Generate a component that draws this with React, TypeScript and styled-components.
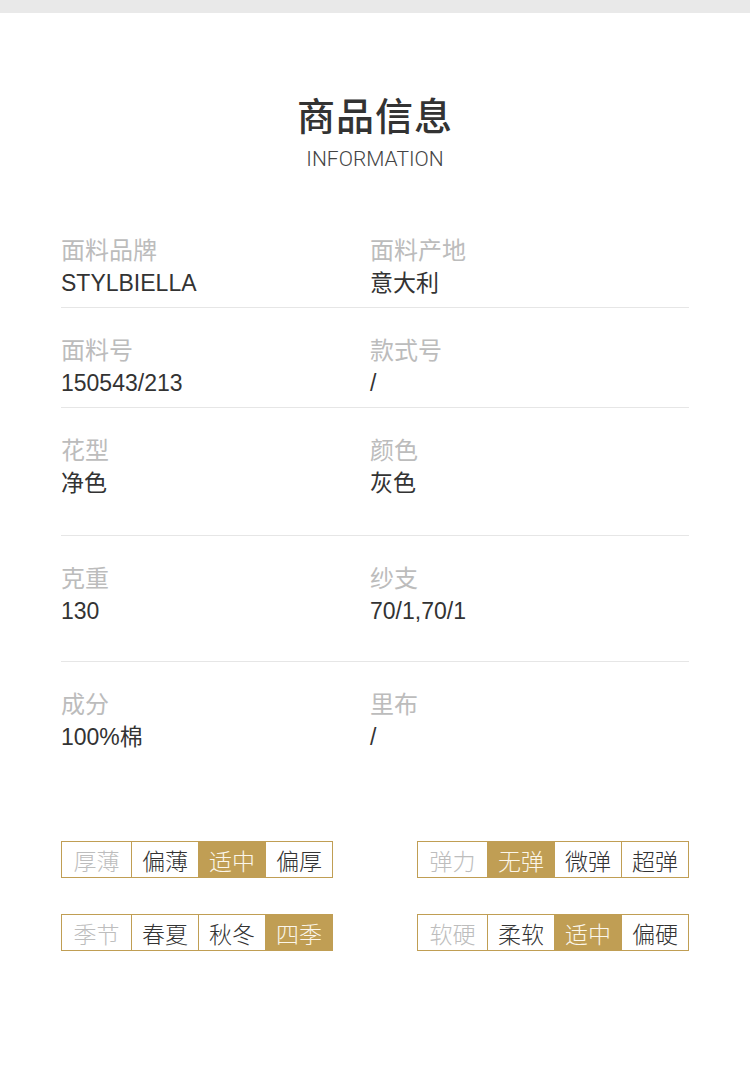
import styled, { createGlobalStyle } from 'styled-components';

const GOLD = '#c09e54';

const GlobalStyle = createGlobalStyle`
  body {
    margin: 0;
    background: #fff;
    font-family: "Liberation Sans", "Noto Sans CJK SC", sans-serif;
  }
`;

type Spec = { label: string; value: string };
type Row = { height: number; left: Spec; right: Spec };

const ROWS: Row[] = [
  { height: 100, left: { label: '面料品牌', value: 'STYLBIELLA' }, right: { label: '面料产地', value: '意大利' } },
  { height: 100, left: { label: '面料号', value: '150543/213' }, right: { label: '款式号', value: '/' } },
  { height: 128, left: { label: '花型', value: '净色' }, right: { label: '颜色', value: '灰色' } },
  { height: 126, left: { label: '克重', value: '130' }, right: { label: '纱支', value: '70/1,70/1' } },
  { height: 126, left: { label: '成分', value: '100%棉' }, right: { label: '里布', value: '/' } },
];

type Tag = { title: string; options: string[]; active: number };

const TAGS: Tag[][] = [
  [
    { title: '厚薄', options: ['偏薄', '适中', '偏厚'], active: 1 },
    { title: '弹力', options: ['无弹', '微弹', '超弹'], active: 0 },
  ],
  [
    { title: '季节', options: ['春夏', '秋冬', '四季'], active: 2 },
    { title: '软硬', options: ['柔软', '适中', '偏硬'], active: 1 },
  ],
];

const TopBar = styled.div`
  height: 13px;
  background: #e9e9e9;
`;

const Header = styled.header`
  display: flex;
  flex-direction: column;
  align-items: center;
  padding-top: 78px;
`;

const Title = styled.h1`
  margin: 0;
  font-family: "Noto Sans CJK SC", sans-serif;
  font-size: 38px;
  font-weight: 500;
  line-height: 46px;
  color: #333;
  letter-spacing: 1px;
`;

const Subtitle = styled.div`
  margin-top: 10px;
  font-family: Roboto, "Liberation Sans", sans-serif;
  font-weight: 300;
  font-size: 21px;
  line-height: 24px;
  color: #444;
`;

const Table = styled.section`
  margin: 37px 61px 0;
`;

const SpecRow = styled.div<{ $h: number; $last: boolean }>`
  display: grid;
  grid-template-columns: 309px 1fr;
  height: ${p => p.$h}px;
  box-sizing: border-box;
  padding-top: 27px;
  border-bottom: ${p => (p.$last ? 'none' : '1px solid #e6e6e6')};
`;

const Cell = styled.div`
  display: flex;
  flex-direction: column;
`;

const Label = styled.div`
  font-size: 24px;
  line-height: 32px;
  color: #bcbcbc;
`;

const Value = styled.div`
  font-size: 23px;
  line-height: 32px;
  color: #333;
`;

const Tags = styled.section`
  margin: 53px 61px 0;
  display: flex;
  flex-direction: column;
  gap: 36px;
`;

const TagLine = styled.div`
  display: flex;
  justify-content: space-between;
`;

const Group = styled.div`
  display: flex;
  border: 1px solid ${GOLD};
  height: 37px;
  box-sizing: border-box;
`;

const Option = styled.div<{ $title?: boolean; $active?: boolean }>`
  width: ${p => (p.$title ? '69px' : '66px')};
  border-left: ${p => (p.$title ? 'none' : `1px solid ${GOLD}`)};
  display: flex;
  align-items: center;
  justify-content: center;
  font-family: "Noto Sans CJK SC", sans-serif;
  font-size: 23px;
  font-weight: 300;
  background: ${p => (p.$active ? GOLD : '#fff')};
  color: ${p => (p.$title ? '#bdbdbd' : p.$active ? '#fbf6ea' : '#333')};
`;

function App() {
  return (
    <>
      <GlobalStyle />
      <TopBar />
      <Header>
        <Title>商品信息</Title>
        <Subtitle>INFORMATION</Subtitle>
      </Header>
      <Table>
        {ROWS.map((row, i) => (
          <SpecRow key={i} $h={row.height} $last={i === ROWS.length - 1}>
            {[row.left, row.right].map(s => (
              <Cell key={s.label}>
                <Label>{s.label}</Label>
                <Value>{s.value}</Value>
              </Cell>
            ))}
          </SpecRow>
        ))}
      </Table>
      <Tags>
        {TAGS.map((line, i) => (
          <TagLine key={i}>
            {line.map(tag => (
              <Group key={tag.title}>
                <Option $title>{tag.title}</Option>
                {tag.options.map((o, j) => (
                  <Option key={o} $active={j === tag.active}>
                    {o}
                  </Option>
                ))}
              </Group>
            ))}
          </TagLine>
        ))}
      </Tags>
    </>
  );
}

export default App;
